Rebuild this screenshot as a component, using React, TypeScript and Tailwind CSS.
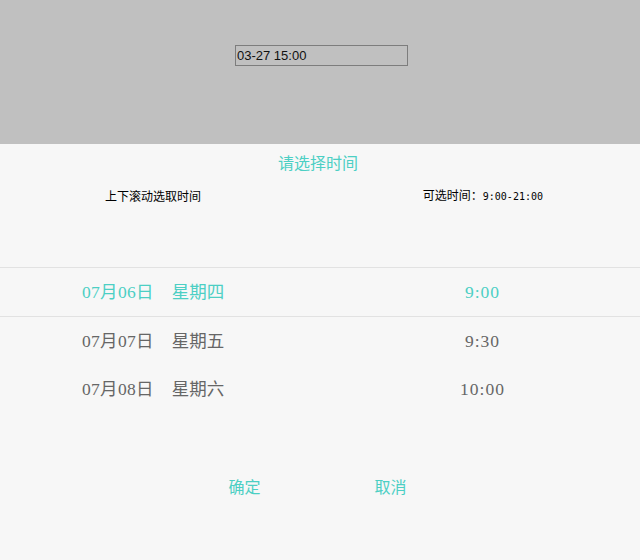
import { useState } from "react";

const days = [
  { date: "07月06日", week: "星期四" },
  { date: "07月07日", week: "星期五" },
  { date: "07月08日", week: "星期六" },
];

const times = ["9:00", "9:30", "10:00"];

export default function App() {
  const [value] = useState("03-27 15:00");

  return (
    <div className="flex h-[560px] w-[640px] flex-col bg-[#f7f7f7] font-['Liberation_Sans','Noto_Sans_CJK_SC',sans-serif]">
      <div className="flex h-[144px] flex-none bg-[#c0c0c0] pl-[235px] pt-[45px]">
        <input
          readOnly
          value={value}
          className="h-[21px] w-[173px] border border-[#7d7d7d] bg-transparent px-[1px] text-[13px] leading-none text-[#111] outline-none"
        />
      </div>

      <div className="flex flex-1 flex-col">
        <p className="pr-[4px] pt-[10px] text-center text-[16px] leading-[20px] text-[#4ccfc4]">
          请选择时间
        </p>
        <div className="mt-[14px] flex items-center justify-between pl-[105px] pr-[97px] text-[12px] leading-[16px] text-black">
          <span>上下滚动选取时间</span>
          <span>
            可选时间：
            <span className="font-['DejaVu_Sans_Mono',monospace] text-[10px]">9:00-21:00</span>
          </span>
        </div>

        <div className="mt-[62px] flex font-['Liberation_Serif','Noto_Sans_CJK_SC',serif] text-[17.5px]">
          <div className="flex w-1/2 flex-col">
            {days.map((d, i) => (
              <div
                key={d.date}
                className={`flex items-center gap-[18px] pl-[82px] ${
                  i === 0
                    ? "h-[50px] border-y border-[#e2e2e2] text-[#4ccfc4]"
                    : "h-[48px] text-[#666]"
                }`}
              >
                <span className="tracking-[0.3px]">{d.date}</span>
                <span>{d.week}</span>
              </div>
            ))}
          </div>
          <div className="flex w-1/2 flex-col">
            {times.map((t, i) => (
              <div
                key={t}
                className={`flex items-center justify-center pl-[5px] tracking-[1px] ${
                  i === 0
                    ? "h-[50px] border-y border-[#e2e2e2] text-[#4ccfc4]"
                    : "h-[48px] text-[#666]"
                }`}
              >
                {t}
              </div>
            ))}
          </div>
        </div>

        <div className="mt-[65px] flex justify-center gap-[114px] pr-[5px] text-[16px] text-[#4ccfc4]">
          <button className="leading-[20px]">确定</button>
          <button className="leading-[20px]">取消</button>
        </div>
      </div>
    </div>
  );
}
